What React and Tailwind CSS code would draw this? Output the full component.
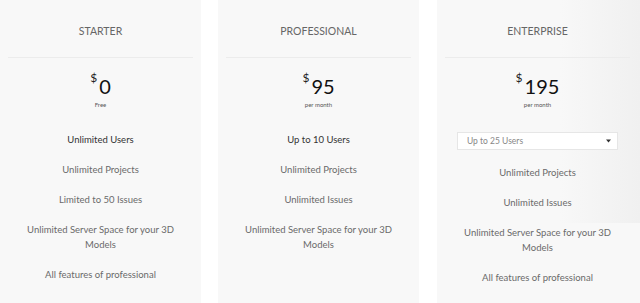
import React from "react";

const font = { fontFamily: "Lato, 'Open Sans', sans-serif" };

function Price({ amount, note }) {
  return (
    <div className="flex flex-col items-center">
      <div className="flex items-start pt-[18px]">
        <span className="text-[12px] leading-[12px] mt-[-4px] mr-[2px] text-[#222]">$</span>
        <span className="text-[20px] leading-[20px] text-[#111]">{amount}</span>
      </div>
      <div className="mt-[5px] text-[6px] leading-[8px] text-[#555]">{note}</div>
    </div>
  );
}

function Card({ title, amount, note, first, items, select, bg = "bg-[#f8f8f8]" }) {
  return (
    <div className={`relative ${bg} flex flex-col items-center h-[303px]`}>
      <div className="h-[57px] pt-[24px] text-[10.5px] leading-[14px] text-[#666]">{title}</div>
      <div className="h-px bg-[#ececec] self-stretch mx-[8px]" />
      <Price amount={amount} note={note} />
      <div className="mt-[23px] w-full flex flex-col items-center px-[20px] text-[9.5px] leading-[15px] text-center">
        {select ? (
          <div className="w-full mb-[15px] h-[18px] bg-white border border-[#e6e6e6] flex items-center justify-between pl-[9px] pr-[6px] text-[8.5px] text-[#888]">
            <span>{select}</span>
            <svg width="5" height="4" viewBox="0 0 5 4"><path d="M0 0.5 L5 0.5 L2.5 3.5 Z" fill="#333" /></svg>
          </div>
        ) : (
          <div className="mb-[15px] text-[#333]">{first}</div>
        )}
        {items.map((t, i) => (
          <div key={i} className="mb-[15px] text-[#6a6a6a]">{t}</div>
        ))}
      </div>
    </div>
  );
}

export default function App() {
  return (
    <div className="w-[640px] h-[303px] bg-white flex overflow-hidden" style={font}>
      <div className="w-[201px] shrink-0">
        <Card
          title="STARTER"
          amount="0"
          note="Free"
          first="Unlimited Users"
          items={[
            "Unlimited Projects",
            "Limited to 50 Issues",
            "Unlimited Server Space for your 3D Models",
            "All features of professional",
          ]}
        />
      </div>
      <div className="w-[201px] shrink-0 ml-[17px]">
        <Card
          title="PROFESSIONAL"
          amount="95"
          note="per month"
          first="Up to 10 Users"
          items={[
            "Unlimited Projects",
            "Unlimited Issues",
            "Unlimited Server Space for your 3D Models",
          ]}
        />
      </div>
      <div className="w-[203px] shrink-0 ml-[18px] bg-[#f8f8f8] pr-[2px] relative">
        <div className="absolute right-0 top-0 w-[80px] h-[223px] bg-gradient-to-l from-[#f0f0f0] to-transparent" />
        <div className="relative w-[201px]">
          <Card
            title="ENTERPRISE"
            amount="195"
            note="per month"
            select="Up to 25 Users"
            items={[
              "Unlimited Projects",
              "Unlimited Issues",
              "Unlimited Server Space for your 3D Models",
              "All features of professional",
            ]}
            bg="bg-transparent"
          />
        </div>
      </div>
    </div>
  );
}
